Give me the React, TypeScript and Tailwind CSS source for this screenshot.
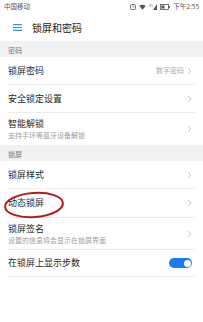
import React from 'react';

const Chevron = () => (
  <svg width="5" height="8" viewBox="0 0 5 8" className="shrink-0">
    <path d="M1 1 L4 4 L1 7" fill="none" stroke="#c4c4c4" strokeWidth="0.9" />
  </svg>
);

const SectionHeader = ({ title }: { title: string }) => (
  <div className="h-[16px] bg-[#f1f1f1] px-2 flex items-center pt-[2px] text-[7px] text-[#777]">{title}</div>
);

const Row = ({
  title,
  sub,
  right,
  h,
  last,
  children,
}: {
  title: React.ReactNode;
  sub?: string;
  right?: React.ReactNode;
  h: string;
  last?: boolean;
  children?: React.ReactNode;
}) => (
  <div className={`relative mx-2 flex items-center justify-between ${h} ${last ? '' : 'border-b border-[#ececec]'}`}>
    <div className="flex flex-col">
      <span className="text-[9px] leading-[12px] text-[#1f1f1f]">{title}</span>
      {sub && <span className="text-[7px] leading-[10px] text-[#a0a0a0]">{sub}</span>}
    </div>
    <div className="flex items-center gap-[3px] mr-[3px]">
      {right}
      {children ?? <Chevron />}
    </div>
  </div>
);

const StatusBar = () => (
  <div className="h-[13px] flex items-center justify-between px-[4px] text-[6.5px] text-[#555]">
    <span>中国移动</span>
    <div className="flex items-center gap-[3px]">
      <svg width="6" height="6" viewBox="0 0 6 6">
        <rect x="0.5" y="0.5" width="5" height="5" rx="1" fill="none" stroke="#555" strokeWidth="0.8" />
        <path d="M3 1.5 V3 H4.2" fill="none" stroke="#555" strokeWidth="0.7" />
      </svg>
      <svg width="7" height="6" viewBox="0 0 7 6">
        <path d="M0.3 2 Q3.5 -0.6 6.7 2 L3.5 5.8 Z" fill="#555" />
      </svg>
      <svg width="8" height="6" viewBox="0 0 8 6">
        <text x="0" y="3" fontSize="3" fill="#555">4G</text>
        <path d="M4 6 L8 6 L8 0 Z" fill="#555" />
      </svg>
      <svg width="10" height="6" viewBox="0 0 10 6">
        <rect x="0.5" y="0.5" width="8" height="5" fill="none" stroke="#555" strokeWidth="0.8" />
        <rect x="1.5" y="1.5" width="3" height="3" fill="#555" />
        <rect x="8.7" y="2" width="1.2" height="2" fill="#555" />
      </svg>
      <span>下午2:55</span>
    </div>
  </div>
);

export default function App() {
  return (
    <div
      className="w-[203px] h-[322px] bg-white overflow-hidden"
      style={{ fontFamily: '"Noto Sans CJK SC", "Noto Sans", sans-serif' }}
    >
      <StatusBar />
      <div className="h-[28px] flex items-center px-[13px] gap-[10px]">
        <svg width="9" height="7" viewBox="0 0 9 7">
          <path d="M0 0.6 H9 M0 3.5 H9 M0 6.4 H9" stroke="#3d8fe0" strokeWidth="1.1" />
        </svg>
        <span className="text-[10px] text-[#222]">锁屏和密码</span>
      </div>
      <SectionHeader title="密码" />
      <Row title="锁屏密码" h="h-[28px]" right={<span className="text-[7px] text-[#aaa]">数字密码</span>} />
      <Row title="安全锁定设置" h="h-[28px]" />
      <Row title="智能解锁" sub="支持手环等蓝牙设备解锁" h="h-[32px]" last />
      <SectionHeader title="锁屏" />
      <Row title="锁屏样式" h="h-[28px]" />
      <div className="relative">
        <Row title="动态锁屏" h="h-[29px]" />
        <svg className="absolute left-[1px] top-[1px] pointer-events-none" width="64" height="30" viewBox="0 0 64 30">
          <ellipse cx="33" cy="15" rx="29" ry="12" fill="none" stroke="#b01c1c" strokeWidth="2" transform="rotate(-4 33 15)" />
        </svg>
      </div>
      <Row title="锁屏签名" sub="设置的信息将会显示在锁屏界面" h="h-[32px]" />
      <Row title="在锁屏上显示步数" h="h-[27px]">
        <div className="w-[23px] h-[10px] rounded-full bg-[#1a7cf3] flex items-center justify-end pr-[1.5px]">
          <div className="w-[7px] h-[7px] rounded-full bg-white" />
        </div>
      </Row>
    </div>
  );
}
